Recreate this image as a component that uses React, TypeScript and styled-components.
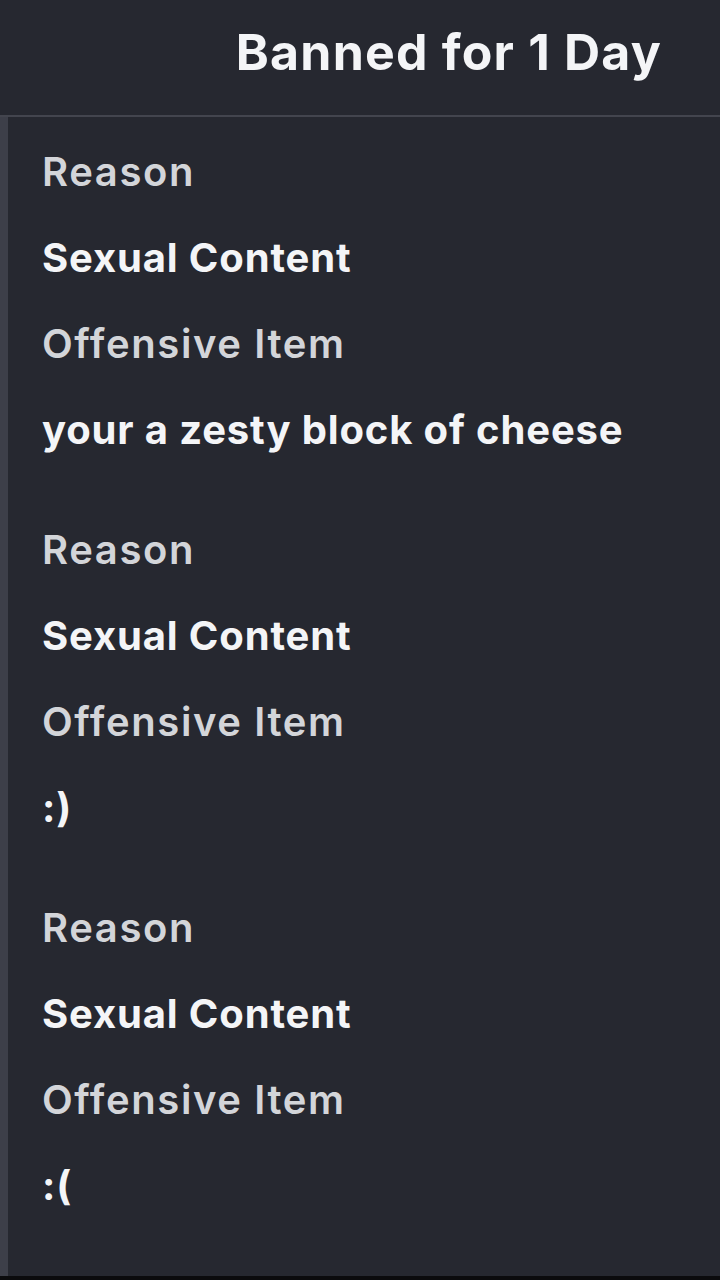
import styled, { createGlobalStyle } from "styled-components";

const GlobalStyle = createGlobalStyle`
  html, body {
    margin: 0;
    padding: 0;
    background: #0b0b0d;
  }
  body {
    font-family: Inter, "Noto Sans", sans-serif;
  }
`;

const Screen = styled.div`
  width: 720px;
  height: 1276px;
  background: #262830;
  display: flex;
  flex-direction: column;
  overflow: hidden;
`;

const TopBar = styled.header`
  height: 117px;
  box-sizing: border-box;
  flex-shrink: 0;
  display: flex;
  align-items: center;
  justify-content: flex-end;
  padding: 0 58px 12px 0;
  border-bottom: 2px solid #43454e;
`;

const Title = styled.h1`
  margin: 0;
  font-size: 50px;
  font-weight: 700;
  color: #f4f5f7;
  letter-spacing: 1.2px;
`;

const Body = styled.div`
  flex: 1;
  border-left: 8px solid #3d3f49;
  padding: 12px 0 0 34px;
  display: flex;
  flex-direction: column;
  gap: 34px;
`;

const Entry = styled.section`
  display: flex;
  flex-direction: column;
`;

const Line = styled.div<{ $label?: boolean }>`
  height: 86px;
  line-height: 86px;
  font-size: 40px;
  font-weight: ${(p) => (p.$label ? 600 : 700)};
  letter-spacing: ${(p) => (p.$label ? "1.6px" : "0.85px")};
  color: ${(p) => (p.$label ? "#d3d5d9" : "#f4f5f7")};
  white-space: nowrap;
`;

type Ban = { reason: string; item: string };

const bans: Ban[] = [
  { reason: "Sexual Content", item: "your a zesty block of cheese" },
  { reason: "Sexual Content", item: ":)" },
  { reason: "Sexual Content", item: ":(" },
];

const App = () => {
  return (
    <>
      <GlobalStyle />
      <Screen>
        <TopBar>
          <Title>Banned for 1 Day</Title>
        </TopBar>
        <Body>
          {bans.map((ban, i) => (
            <Entry key={i}>
              <Line $label>Reason</Line>
              <Line>{ban.reason}</Line>
              <Line $label>Offensive Item</Line>
              <Line>{ban.item}</Line>
            </Entry>
          ))}
        </Body>
      </Screen>
    </>
  );
};

export default App;
